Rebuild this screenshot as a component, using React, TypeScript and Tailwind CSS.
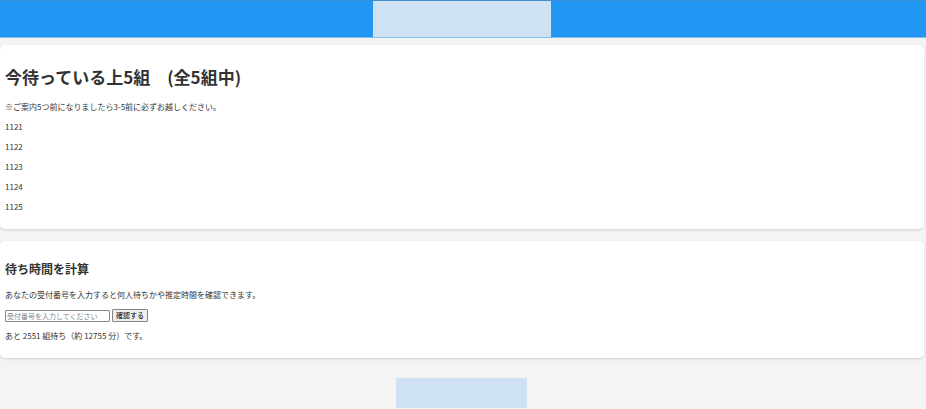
const waiting = [1121, 1122, 1123, 1124, 1125];

function Header() {
  return (
    <header className="flex h-[38px] justify-center border-y border-t-[#3f8fd2] border-b-[#7fbdec] bg-[#2196f3] pr-[3px]">
      <div className="h-9 w-[178px] bg-[#cfe2f3]" />
    </header>
  );
}

function WaitingList() {
  return (
    <section className="rounded-[5px] bg-white px-[5px] pt-5 pb-4 shadow-[0_1px_3px_rgba(0,0,0,0.15)]">
      <h1 className="text-[17px] leading-6 font-bold">今待っている上5組　(全5組中)</h1>
      <p className="mt-3 leading-3">※ご案内5つ前になりましたら3-5前に必ずお越しください。</p>
      {waiting.map((number) => (
        <p key={number} className="mt-2 leading-3">
          {number}
        </p>
      ))}
    </section>
  );
}

function WaitTime() {
  return (
    <section className="mt-3 rounded-[5px] bg-white px-[5px] pt-5 pb-4 shadow-[0_1px_3px_rgba(0,0,0,0.15)]">
      <h2 className="text-[12px] leading-4 font-bold">待ち時間を計算</h2>
      <p className="mt-3 leading-3">あなたの受付番号を入力すると何人待ちかや推定時間を確認できます。</p>
      <form className="mt-2 flex items-center gap-[2px]" onSubmit={(e) => e.preventDefault()}>
        <input
          type="text"
          aria-label="受付番号"
          placeholder="受付番号を入力してください"
          className="h-3 w-[105px] rounded-[1px] border border-[#858585] bg-white px-px text-[7px] placeholder:text-[#858585]"
        />
        <button
          type="submit"
          className="flex h-[13px] w-9 items-center justify-center rounded-[1px] border border-[#858585] bg-[#efefef] text-[7px] whitespace-nowrap text-black"
        >
          確認する
        </button>
      </form>
      <p className="mt-2 leading-3">あと 2551 組待ち（約 12755 分）です。</p>
    </section>
  );
}

export default function App() {
  return (
    <div className="min-h-screen bg-[#f4f4f4] font-['Noto_Sans_CJK_JP',sans-serif] text-[8px] text-[#333]">
      <Header />
      <main className="mt-[7px] mr-[2px]">
        <WaitingList />
        <WaitTime />
      </main>
      <footer className="flex justify-center pt-5 pr-1 pb-px">
        <div className="h-[30px] w-[131px] rounded-[1px] bg-[#cfe2f3]" />
      </footer>
    </div>
  );
}
